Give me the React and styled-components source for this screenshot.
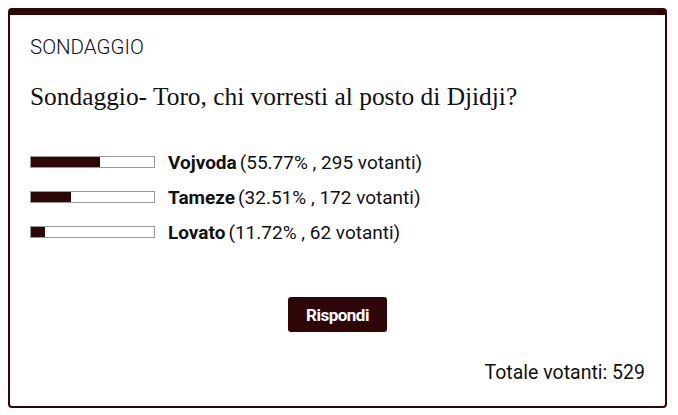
import styled, { createGlobalStyle } from "styled-components";

const GlobalStyle = createGlobalStyle`
  body {
    margin: 8px;
    background: #fff;
    font-family: Roboto, "Liberation Sans", sans-serif;
    color: #111;
  }
`;

const options = [
  { name: "Vojvoda", percent: 55.77, votes: 295 },
  { name: "Tameze", percent: 32.51, votes: 172 },
  { name: "Lovato", percent: 11.72, votes: 62 },
];

export default function App() {
  const total = options.reduce((sum, o) => sum + o.votes, 0);
  return (
    <>
      <GlobalStyle />
      <Card>
        <Label>SONDAGGIO</Label>
        <Question>Sondaggio- Toro, chi vorresti al posto di Djidji?</Question>
        <Results>
          {options.map((o) => (
            <Row key={o.name}>
              <Bar>
                <Fill style={{ width: `${o.percent}%` }} />
              </Bar>
              <Answer>
                <strong>{o.name}</strong>
                <span>
                  ({o.percent.toFixed(2)}% , {o.votes} votanti)
                </span>
              </Answer>
            </Row>
          ))}
        </Results>
        <Actions>
          <Button>Rispondi</Button>
        </Actions>
        <Total>Totale votanti: {total}</Total>
      </Card>
    </>
  );
}

const Card = styled.div`
  width: 659px;
  height: 400px;
  box-sizing: border-box;

  padding: 20px 20px 0 20px;
  border: 2px solid #2d0605;
  border-top-width: 7px;
  border-radius: 4px;

  display: flex;
  flex-direction: column;
`;

const Label = styled.div`
  font-size: 20.5px;
  font-weight: 300;
  line-height: 24px;
  color: #111;
`;

const Question = styled.h2`
  margin: 22px 0 0;

  font-family: "Liberation Serif", serif;
  font-size: 25.4px;
  font-weight: 400;
  line-height: 30px;
  color: #111;
`;

const Results = styled.div`
  margin-top: 40px;

  display: flex;
  flex-direction: column;
  gap: 13px;
`;

const Row = styled.div`
  height: 22px;

  display: flex;
  align-items: center;
  gap: 13px;
`;

const Bar = styled.div`
  width: 125px;
  height: 12px;
  box-sizing: border-box;

  border: 1px solid #999;
  background: #fff;
`;

const Fill = styled.div`
  height: 100%;

  background: #2d0605;
`;

const Answer = styled.div`
  font-size: 19px;
  color: #111;

  strong {
    font-weight: 700;
    margin-right: 3px;
  }
`;

const Actions = styled.div`
  margin-top: 54px;

  display: flex;
  justify-content: center;
`;

const Button = styled.button`
  width: 99px;
  height: 35px;

  border: none;
  border-radius: 3px;

  background: #2d0605;
  color: #fff;

  font-family: Roboto, sans-serif;
  font-size: 17px;
  font-weight: 700;
  letter-spacing: -0.5px;
`;

const Total = styled.div`
  margin-top: 29px;

  align-self: flex-end;

  font-size: 19.5px;
  color: #111;
`;
